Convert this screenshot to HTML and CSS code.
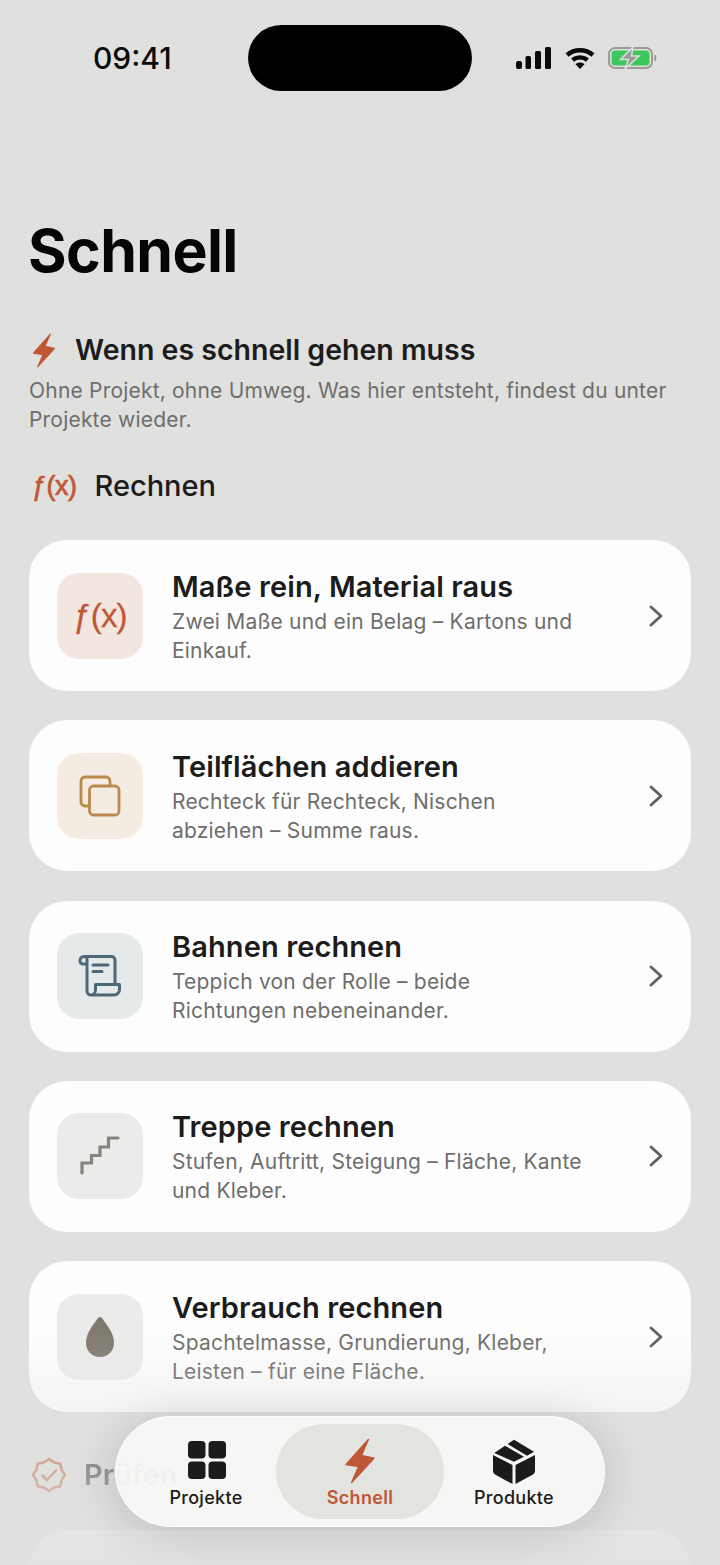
FILE: index.html
```html
<!DOCTYPE html>
<html lang="de">
<head>
<meta charset="utf-8">
<title>Schnell</title>
<link rel="stylesheet" href="styles.css">
</head>
<body>
<div class="screen">
  <header class="status">
    <span class="time">09:41</span>
    <div class="island"></div>
    <div class="status-icons">
      <svg class="ic-signal" viewBox="0 0 35 22"><rect x="0" y="14" width="6" height="8" rx="2"/><rect x="9.500" y="9" width="5.500" height="13" rx="1.500"/><rect x="19" y="4" width="6" height="18" rx="1.500"/><rect x="29" y="0" width="6" height="22" rx="1.500"/></svg>
      <svg class="ic-wifi" viewBox="0 0 30 22"><path class="wifi-arc" d="M2 8 C9.500 1.500 20.500 1.500 28 8"/><path class="wifi-arc" d="M7.500 13 C12 9.500 18 9.500 22.500 13"/><path d="M15 22 L10.500 17.300 C13 15 17 15 19.500 17.300 Z"/></svg>
      <svg class="ic-battery" viewBox="0 0 50 22"><rect class="bat-frame" x="1" y="1" width="43" height="20" rx="6"/><rect class="bat-fill" x="3.500" y="3.500" width="38" height="15" rx="3.500"/><path class="bat-nub" d="M46.500 7.500 c2.500 .8 2.500 6.200 0 7 Z"/><path class="bat-bolt" d="M25 0 L12.500 12.500 H20.500 L17 22 L31 9 H23.500 Z"/></svg>
    </div>
  </header>

  <main class="content">
    <h1 class="page-title">Schnell</h1>

    <section class="intro">
      <div class="intro-head">
        <svg class="ic-bolt-sm" viewBox="1 1 22 33"><path d="M18 2 L2 20 L11 21.500 L6 33 L22 15.500 L13 13.500 Z"/></svg>
        <h2 class="intro-title">Wenn es schnell gehen muss</h2>
      </div>
      <p class="intro-text">Ohne Projekt, ohne Umweg. Was hier entsteht, findest du unter Projekte wieder.</p>
    </section>

    <div class="group-head">
      <span class="fx fx-sm">ƒ(x)</span>
      <h3 class="group-title">Rechnen</h3>
    </div>

    <ul class="cards">
      <li class="card">
        <div class="tile tile-red"><span class="fx fx-lg">ƒ(x)</span></div>
        <div class="card-text">
          <div class="card-title">Maße rein, Material raus</div>
          <div class="card-sub">Zwei Maße und ein Belag – Kartons und Einkauf.</div>
        </div>
        <svg class="chev" viewBox="0 0 16 24"><path d="M3 3 L13 12 L3 21"/></svg>
      </li>
      <li class="card">
        <div class="tile tile-sand">
          <svg class="ic-copy" viewBox="0 0 42 42"><path d="M10 31 H6 a4 4 0 0 1-4-4 V6 a4 4 0 0 1 4-4 H27 a4 4 0 0 1 4 4 V10"/><rect x="10.500" y="11" width="29.500" height="29" rx="4"/></svg>
        </div>
        <div class="card-text">
          <div class="card-title">Teilflächen addieren</div>
          <div class="card-sub">Rechteck für Rechteck, Nischen<br>abziehen – Summe raus.</div>
        </div>
        <svg class="chev" viewBox="0 0 16 24"><path d="M3 3 L13 12 L3 21"/></svg>
      </li>
      <li class="card">
        <div class="tile tile-blue">
          <svg class="ic-scroll" viewBox="0 0 44 44"><path d="M37 30 V6 a3.500 3.500 0 0 0-3.500-3.500 H6 A4 4 0 0 0 2 6.500 C2 8.500 3 9.500 4 10 H9 M6 2.500 A3 3 0 0 1 9 6 V37 a4 4 0 0 0 4 4 H36 a5.500 5.500 0 0 0 5.500-5.500 V30.500 H17.500 V36 a5 5 0 0 1-4.500 5"/><path d="M15 11 H30 M15 17.500 H24"/></svg>
        </div>
        <div class="card-text">
          <div class="card-title">Bahnen rechnen</div>
          <div class="card-sub">Teppich von der Rolle – beide<br>Richtungen nebeneinander.</div>
        </div>
        <svg class="chev" viewBox="0 0 16 24"><path d="M3 3 L13 12 L3 21"/></svg>
      </li>
      <li class="card">
        <div class="tile tile-grey">
          <svg class="ic-stairs" viewBox="0 0 40 40"><path d="M2 37 V27 H11.500 V19.500 H20 V11 H28.500 V2 H38"/></svg>
        </div>
        <div class="card-text">
          <div class="card-title">Treppe rechnen</div>
          <div class="card-sub">Stufen, Auftritt, Steigung – Fläche, Kante und Kleber.</div>
        </div>
        <svg class="chev" viewBox="0 0 16 24"><path d="M3 3 L13 12 L3 21"/></svg>
      </li>
      <li class="card">
        <div class="tile tile-grey">
          <svg class="ic-drop" viewBox="0 0 28 40"><path d="M14 0 C15.500 0 16.500 1.500 17.500 3 C21 8.500 28 16 28 26 C28 34 22 40 14 40 C6 40 0 34 0 26 C0 16 7 8.500 10.500 3 C11.500 1.500 12.500 0 14 0 Z"/></svg>
        </div>
        <div class="card-text">
          <div class="card-title">Verbrauch rechnen</div>
          <div class="card-sub">Spachtelmasse, Grundierung, Kleber, Leisten – für eine Fläche.</div>
        </div>
        <svg class="chev" viewBox="0 0 16 24"><path d="M3 3 L13 12 L3 21"/></svg>
      </li>
    </ul>

    <div class="group-head group-next">
      <svg class="ic-seal" viewBox="0 0 36 36"><path class="seal" d="M34 18 L30.470 23.170 L29.310 29.310 L23.170 30.470 L18 34 L12.830 30.470 L6.690 29.310 L5.530 23.170 L2 18 L5.530 12.830 L6.690 6.690 L12.830 5.530 L18 2 L23.170 5.530 L29.310 6.690 L30.470 12.830 Z"/><path class="seal" d="M11.500 18.500 L16 23 L25 13.500"/></svg>
      <h3 class="group-title">Prüfen</h3>
    </div>
    <div class="card card-ghost"></div>
  </main>

  <div class="fade"></div>

  <nav class="tabbar">
    <div class="tab">
      <svg class="ic-grid" viewBox="0 0 38 38"><rect x="0" y="0" width="17.500" height="17.500" rx="4"/><rect x="20.500" y="0" width="17.500" height="17.500" rx="4"/><rect x="0" y="20.500" width="17.500" height="17.500" rx="4"/><rect x="20.500" y="20.500" width="17.500" height="17.500" rx="4"/></svg>
      <span class="tab-label">Projekte</span>
    </div>
    <div class="tab tab-active">
      <svg class="ic-bolt-lg" viewBox="1 1 22 33"><path d="M18 2 L2 20 L11 21.500 L6 33 L22 15.500 L13 13.500 Z"/></svg>
      <span class="tab-label">Schnell</span>
    </div>
    <div class="tab">
      <svg class="ic-box" viewBox="0 0 42 45"><path d="M14.700 5 L21 .7 L41 12.700 L34 16.700 Z"/><path d="M1.300 14 L12 6.700 L31 17.700 L21 22.700 Z"/><path d="M0 16 L19.500 26 V45 L2 35.500 Q0 34.500 0 32 Z"/><path d="M42 16 L22.500 26 V45 L40 35.500 Q42 34.500 42 32 Z"/></svg>
      <span class="tab-label">Produkte</span>
    </div>
  </nav>
</div>
</body>
</html>
```

FILE: styles.css
```css
* { box-sizing: border-box; margin: 0; padding: 0; }

html, body { width: 720px; height: 1565px; overflow: hidden; background: #e0e0de; }

body {
  font-family: Inter, "Noto Sans", sans-serif;
  color: #1c1c1c;
}

.screen { position: relative; width: 720px; height: 1565px; overflow: hidden; }

/* status bar */
.status {
  position: relative;
  height: 116px;
  display: flex;
  align-items: center;
  justify-content: space-between;
  padding: 0 62px 0 93px;
}
.time { font-size: 30px; font-weight: 500; color: #0a0a0a; }
.island {
  position: absolute;
  left: 248px;
  top: 25px;
  width: 224px;
  height: 66px;
  border-radius: 33px;
  background: #000;
}
.status-icons { display: flex; align-items: center; gap: 13.500px; }
.ic-signal { width: 35px; height: 22px; fill: #0a0a0a; }
.ic-wifi { width: 30px; height: 22px; fill: #0a0a0a; }
.wifi-arc { fill: none; stroke: #0a0a0a; stroke-width: 4.500; }
.ic-battery { width: 50px; height: 22px; }
.bat-frame { fill: none; stroke: #9a9a98; stroke-width: 2; }
.bat-fill { fill: #3cc85c; }
.bat-nub { fill: #8f8f8d; }
.bat-bolt { fill: #9a9a98; stroke: #e0e0de; stroke-width: 1.500; }

/* main column */
.content { padding: 0 29px; }

.page-title {
  font-size: 59px;
  font-weight: 700;
  letter-spacing: -0.6px;
  line-height: 72px;
  margin-top: 99px;
  margin-left: -1px;
  color: #050505;
}

.intro { margin-top: 43px; }
.intro-head { display: flex; align-items: center; gap: 19px; padding-left: 3px; height: 40px; }
.ic-bolt-sm { width: 24px; height: 35px; fill: #bf5736; stroke: #bf5736; stroke-width: 1; stroke-linejoin: round; }
.intro-title { font-size: 28.500px; font-weight: 600; line-height: 40px; color: #1c1c1c; }
.intro-text { margin-top: 6px; font-size: 21px; line-height: 29px; letter-spacing: 0.2px; color: #6e6e6c; }

.group-head { display: flex; align-items: center; gap: 18px; padding-left: 3px; height: 40px; margin-top: 32px; }
.group-title { font-size: 29px; font-weight: 500; line-height: 40px; color: #1c1c1c; }

.fx { font-family: "Liberation Sans", sans-serif; color: #bf5736; white-space: nowrap; }
.fx-sm { font-size: 27px; font-weight: 400; letter-spacing: -0.5px; -webkit-text-stroke: 0.7px #bf5736; line-height: 40px; }
.fx-lg { font-size: 33px; font-weight: 400; letter-spacing: -0.8px; -webkit-text-stroke: 0.3px #bf5736; line-height: 40px; }

/* cards */
.cards { list-style: none; display: flex; flex-direction: column; gap: 29.250px; margin-top: 34px; }
.card {
  display: flex;
  align-items: center;
  height: 151px;
  padding: 0 27px 0 28px;
  border-radius: 38px;
  background: #fdfdfd;
}
.tile {
  flex: none;
  width: 86px;
  height: 86px;
  border-radius: 22px;
  display: flex;
  align-items: center;
  justify-content: center;
}
.tile-red { background: #f3e5e0; }
.tile-sand { background: #f4ece2; }
.tile-blue { background: #e5e9ea; }
.tile-grey { background: #ebebe9; }

.card-text { flex: 1; min-width: 0; margin-left: 29px; padding: 2px 40px 0 0; }
.card-title { font-size: 29px; font-weight: 600; letter-spacing: 0.1px; line-height: 36px; color: #1c1c1c; }
.card-sub { margin-top: 2px; font-size: 21px; line-height: 29px; letter-spacing: 0.2px; color: #6e6e6c; }

.chev { flex: none; width: 16px; height: 24px; fill: none; stroke: #5f5f5d; stroke-width: 2.800; stroke-linecap: round; stroke-linejoin: round; }

.ic-copy { width: 42px; height: 42px; fill: none; stroke: #ba8a4c; stroke-width: 2.800; stroke-linecap: round; }
.ic-scroll { width: 44px; height: 44px; fill: none; stroke: #4d6877; stroke-width: 3; stroke-linecap: round; stroke-linejoin: round; }
.ic-stairs { width: 40px; height: 40px; fill: none; stroke: #85837c; stroke-width: 3.200; stroke-linecap: round; }
.ic-drop { width: 28px; height: 40px; fill: #7e7a70; }

.group-next { margin-top: 43px; gap: 17px; padding-left: 2px; filter: blur(.6px); }
.group-next .group-title { font-weight: 600; }
.ic-seal { width: 36px; height: 36px; }
.seal { fill: none; stroke: #bf5736; stroke-width: 2.500; stroke-linejoin: round; stroke-linecap: round; }
.card-ghost { margin-top: 35px; }

/* bottom fade */
.fade {
  position: absolute;
  left: 0;
  right: 0;
  bottom: 0;
  height: 235px;
  background: linear-gradient(to bottom, rgba(224,224,222,0) 0%, rgba(224,224,222,.3) 35%, rgba(224,224,222,.62) 60%, rgba(224,224,222,.93) 100%);
  pointer-events: none;
}

/* tab bar */
.tabbar {
  position: absolute;
  left: 115px;
  top: 1416px;
  width: 490px;
  height: 111px;
  border-radius: 56px;
  display: flex;
  justify-content: center;
  align-items: center;
  background: rgba(247,247,245,.92);
  border: 1px solid #fff;
  box-shadow: 0 6px 50px rgba(0,0,0,.16);
}
.tab {
  width: 154px;
  height: 95px;
  display: flex;
  flex-direction: column;
  align-items: center;
  justify-content: flex-end;
  gap: 3px;
  padding-bottom: 10px;
}
.tab-active {
  width: 168px;
  margin: 0 -7px;
  border-radius: 48px;
  background: #e3e3df;
}
.tab-label { font-size: 18px; font-weight: 500; letter-spacing: 0.3px; line-height: 22px; color: #1c1c1a; }
.tab-active .tab-label { font-weight: 600; color: #bf5736; }
.ic-grid { width: 38px; height: 38px; fill: #1b1b19; margin: 0 0 5px 1.500px; }
.ic-bolt-lg { width: 32px; height: 46px; fill: #bf5736; stroke: #bf5736; stroke-width: 1; stroke-linejoin: round; }
.ic-box { width: 42px; height: 45px; fill: #1b1b19; }
```
